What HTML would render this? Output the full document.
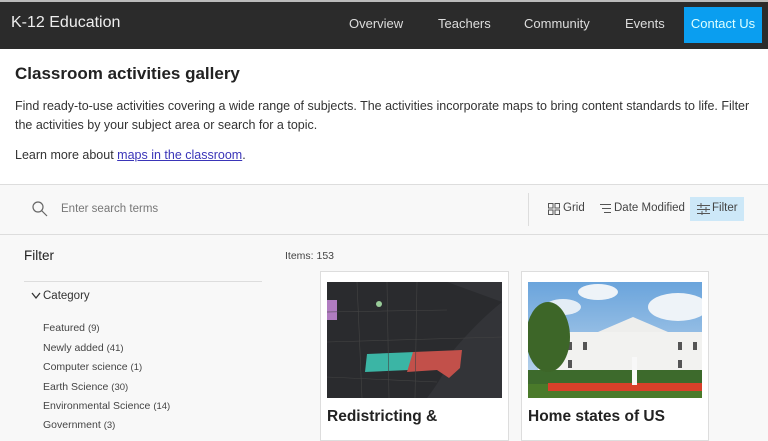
<!DOCTYPE html>
<html><head><meta charset="utf-8"><style>
*{margin:0;padding:0;box-sizing:border-box}
body{width:768px;height:432px;overflow:hidden;background:#f8f8f8;font-family:"Liberation Sans",sans-serif;color:#323232;position:relative}
.a{position:absolute;white-space:nowrap}
.hdr{position:absolute;left:0;top:0;width:768px;height:49px;background:#2b2b2b;border-top:2px solid #bbb}
.nav{color:#ddd;font-size:13px;top:16px}
.top{position:absolute;left:0;top:49px;width:768px;height:136px;background:#fff;border-bottom:1px solid #ddd}
p{font-size:12.5px;letter-spacing:0;color:#333}
.cat{font-size:10.5px;color:#444;left:43px}
.cat span{font-size:9.5px}
</style></head><body>
<div class="hdr"></div>
<div class="a" style="left:11px;top:14px;font-size:16px;color:#eee">K-12 Education</div>
<div class="a nav" style="left:349px">Overview</div>
<div class="a nav" style="left:438px">Teachers</div>
<div class="a nav" style="left:524px">Community</div>
<div class="a nav" style="left:625px">Events</div>
<div class="a" style="left:684px;top:7px;width:78px;height:36px;background:#0a9ef0;color:#dff;font-size:13px;text-align:center;line-height:34px">Contact Us</div>
<div class="top"></div>
<div class="a" style="left:15px;top:64px;font-size:17px;font-weight:bold;color:#222">Classroom activities gallery</div>
<p class="a" style="left:15px;top:99px">Find ready-to-use activities covering a wide range of subjects. The activities incorporate maps to bring content standards to life. Filter</p>
<p class="a" style="left:15px;top:118px">the activities by your subject area or search for a topic.</p>
<p class="a" style="left:15px;top:148px">Learn more about <span style="color:#3a35b8;text-decoration:underline">maps in the classroom</span>.</p>
<div class="a" style="left:0;top:234px;width:768px;height:1px;background:#ddd"></div>
<svg class="a" style="left:32px;top:201px" width="16" height="16"><circle cx="6" cy="6" r="5" fill="none" stroke="#666" stroke-width="1.2"/><line x1="9.5" y1="9.5" x2="15" y2="15" stroke="#666" stroke-width="1.2"/></svg>
<div class="a" style="left:61px;top:203px;font-size:11.5px;color:#777">Enter search terms</div>
<div class="a" style="left:528px;top:193px;width:1px;height:33px;background:#ddd"></div>
<svg class="a" style="left:548px;top:203px" width="12" height="12" fill="none" stroke="#555"><rect x=".5" y=".5" width="4.5" height="4.5"/><rect x="7" y=".5" width="4.5" height="4.5"/><rect x=".5" y="7" width="4.5" height="4.5"/><rect x="7" y="7" width="4.5" height="4.5"/></svg>
<div class="a" style="left:563px;top:202px;font-size:11.5px;color:#444">Grid</div>
<svg class="a" style="left:600px;top:203px" width="12" height="12" stroke="#555"><line x1="0" y1="1.5" x2="11" y2="1.5"/><line x1="2" y1="5.5" x2="11" y2="5.5"/><line x1="4" y1="9.5" x2="11" y2="9.5"/></svg>
<div class="a" style="left:614px;top:202px;font-size:11.5px;color:#444">Date Modified</div>
<div class="a" style="left:690px;top:197px;width:54px;height:24px;background:#cde8f8"></div>
<svg class="a" style="left:697px;top:203px" width="13" height="12" stroke="#555"><line x1="0" y1="2.5" x2="13" y2="2.5"/><line x1="0" y1="6.5" x2="13" y2="6.5"/><line x1="0" y1="10.5" x2="13" y2="10.5"/><line x1="4" y1="0" x2="4" y2="5"/><line x1="9" y1="4" x2="9" y2="9"/><line x1="5" y1="8" x2="5" y2="12"/></svg>
<div class="a" style="left:712px;top:202px;font-size:11.5px;color:#444">Filter</div>
<div class="a" style="left:24px;top:248px;font-size:13.5px;color:#222">Filter</div>
<div class="a" style="left:24px;top:281px;width:238px;height:1px;background:#ddd"></div>
<svg class="a" style="left:31px;top:292px" width="10" height="8"><polyline points="1,1 5,6 9,1" fill="none" stroke="#333" stroke-width="1.3"/></svg>
<div class="a" style="left:43px;top:290px;font-size:11.5px;color:#333">Category</div>
<div class="a cat" style="top:322px">Featured <span>(9)</span></div>
<div class="a cat" style="top:342px">Newly added <span>(41)</span></div>
<div class="a cat" style="top:361px">Computer science <span>(1)</span></div>
<div class="a cat" style="top:381px">Earth Science <span>(30)</span></div>
<div class="a cat" style="top:400px">Environmental Science <span>(14)</span></div>
<div class="a cat" style="top:419px">Government <span>(3)</span></div>
<div class="a" style="left:285px;top:250px;font-size:10.5px;color:#444">Items: 153</div>
<div class="a" style="left:320px;top:271px;width:189px;height:170px;background:#fff;border:1px solid #ddd"></div>
<div class="a" style="left:521px;top:271px;width:188px;height:170px;background:#fff;border:1px solid #ddd"></div>
<svg class="a" style="left:327px;top:282px" width="175" height="116"><rect width="175" height="116" fill="#2a2b2e"/><path d="M120 0 L175 0 L175 116 L100 116 Q120 90 125 70 Q150 40 175 20" fill="#333438"/><polygon points="0,18 10,18 10,38 0,38" fill="#b07cc0"/><polygon points="40,72 88,70 82,88 38,90" fill="#3bb5a5"/><polygon points="86,70 135,68 133,86 122,96 110,88 80,90" fill="#c2504a"/><circle cx="52" cy="22" r="3" fill="#9c9"/><g stroke="#444" stroke-width=".6" fill="none"><path d="M0 60 L175 55 M30 0 L35 116 M60 0 L62 116 M90 0 L88 116 M0 30 L120 28 M0 95 L110 100"/></g></svg>
<svg class="a" style="left:528px;top:282px" width="174" height="116"><defs><linearGradient id="s" x1="0" y1="0" x2="0" y2="1"><stop offset="0" stop-color="#6aa4dc"/><stop offset="1" stop-color="#c8dcee"/></linearGradient></defs><rect width="174" height="116" fill="url(#s)"/><ellipse cx="70" cy="10" rx="20" ry="8" fill="#eef3f8"/><ellipse cx="150" cy="25" rx="30" ry="14" fill="#eef3f8"/><ellipse cx="35" cy="25" rx="18" ry="8" fill="#e4edf6"/><rect x="0" y="100" width="174" height="16" fill="#4a7a2a"/><rect x="10" y="50" width="164" height="52" fill="#f2f2f0"/><polygon points="70,50 105,35 140,50" fill="#eeeeec"/><g fill="#555"><rect x="25" y="60" width="4" height="8"/><rect x="40" y="60" width="4" height="8"/><rect x="55" y="60" width="4" height="8"/><rect x="150" y="60" width="4" height="8"/><rect x="165" y="60" width="4" height="8"/><rect x="25" y="78" width="4" height="8"/><rect x="40" y="78" width="4" height="8"/><rect x="150" y="78" width="4" height="8"/></g><rect x="0" y="88" width="174" height="14" fill="#3d6a2c"/><rect x="20" y="101" width="154" height="8" fill="#d8402a"/><ellipse cx="20" cy="55" rx="22" ry="35" fill="#3d6628"/><rect x="104" y="75" width="5" height="28" fill="#f8f8f8"/></svg>
<div class="a" style="left:327px;top:408px;font-size:15.5px;font-weight:bold;color:#222">Redistricting &amp;</div>
<div class="a" style="left:528px;top:408px;font-size:15.5px;font-weight:bold;color:#222">Home states of US</div>
</body></html>
